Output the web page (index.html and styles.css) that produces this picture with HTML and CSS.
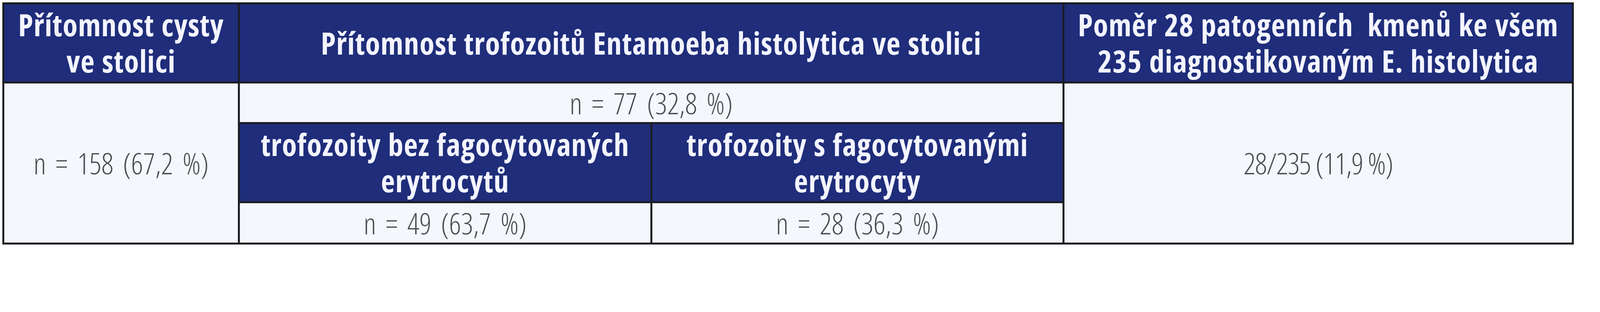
FILE: index.html
```html
<!DOCTYPE html>
<html lang="cs">
<head>
<meta charset="utf-8">
<title>Entamoeba histolytica</title>
<link rel="stylesheet" href="styles.css">
</head>
<body>
<div class="grid">
  <div class="cell head c1">Přítomnost cysty<br>ve stolici</div>
  <div class="cell head c2">Přítomnost trofozoitů Entamoeba histolytica ve stolici</div>
  <div class="cell head c3">Poměr 28 patogenních&nbsp; kmenů ke všem<br>235 diagnostikovaným E. histolytica</div>

  <div class="cell data r-all c1">n = 158 (67,2 %)</div>
  <div class="cell data c2">n = 77 (32,8 %)</div>
  <div class="cell data ratio r-all c3">28/235 (11,9 %)</div>

  <div class="cell head sub-a">trofozoity bez fagocytovaných<br>erytrocytů</div>
  <div class="cell head sub-b">trofozoity s fagocytovanými<br>erytrocyty</div>

  <div class="cell data sub-a">n = 49 (63,7 %)</div>
  <div class="cell data sub-b">n = 28 (36,3 %)</div>
</div>
</body>
</html>
```

FILE: styles.css
```css
html, body {
  margin: 0;
  padding: 0;
  background: #ffffff;
}

.grid {
  margin: 6px;
  width: 4023px;
  box-sizing: border-box;
  display: grid;
  grid-template-columns: 598px 1051px 1050px 1299px;
  grid-template-rows: 198px 99px 198px 101px;
  gap: 5px;
  padding: 5px;
  background: #1b1d22;
}

.cell {
  display: flex;
  align-items: center;
  justify-content: center;
  text-align: center;
  white-space: nowrap;
}

.head {
  background: #1f2d7a;
  color: #f3f4ff;
  font-family: "Open Sans", "Liberation Sans", sans-serif;
  font-weight: 700;
  font-stretch: 75%;
  font-size: 78px;
  letter-spacing: 1.2px;
  word-spacing: 3px;
  line-height: 93px;
}

.data {
  background: #f4f7fc;
  color: #4c4e53;
  font-family: "Open Sans", "Liberation Sans", sans-serif;
  font-weight: 300;
  font-stretch: 75%;
  font-size: 76px;
  word-spacing: 10px;
  line-height: 1;
}

.data.ratio {
  word-spacing: 0;
  letter-spacing: -1.5px;
}

.c1 { grid-column: 1; }
.c2 { grid-column: 2 / span 2; }
.c3 { grid-column: 4; }
.sub-a { grid-column: 2; }
.sub-b { grid-column: 3; }
.r-all { grid-row: 2 / span 3; }
```
